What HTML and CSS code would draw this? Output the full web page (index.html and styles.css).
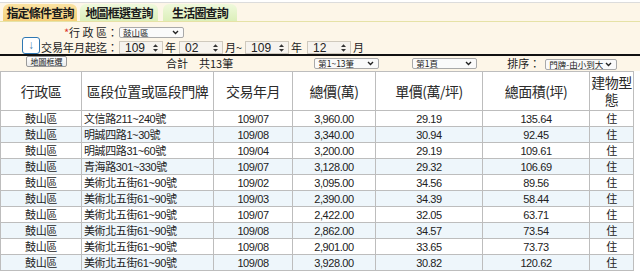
FILE: index.html
```html
<!DOCTYPE html>
<html lang="zh-Hant">
<head>
<meta charset="utf-8">
<title>實價登錄查詢</title>
<link rel="stylesheet" href="styles.css">
</head>
<body>
<div class="topline"></div>
<div class="head">
  <div class="tabs">
    <div class="tab active">指定條件查詢</div>
    <div class="tab t2">地圖框選查詢</div>
    <div class="tab t3">生活圈查詢</div>
  </div>
  <div class="form">
    <div class="row r1">
      <div class="lead"><span class="lbl"><span class="req">*</span>行 政 區：</span></div>
      <div class="sel s-dist">鼓山區<svg class="chev" viewBox="0 0 8 6"><path d="M1 1.2 4 4.3 7 1.2" fill="none" stroke="#222" stroke-width="1.6"/></svg></div>
    </div>
    <div class="row r2">
      <div class="lead"><span class="dl">↓</span><span class="lbl">交易年月起迄：</span></div>
      <div class="num">109<svg class="spin" viewBox="0 0 6 9"><path d="M3 0 6 3.4H0Z M3 9 6 5.6H0Z" fill="#333"/></svg></div>
      <span class="unit">年</span>
      <div class="num">02<svg class="spin" viewBox="0 0 6 9"><path d="M3 0 6 3.4H0Z M3 9 6 5.6H0Z" fill="#333"/></svg></div>
      <span class="unit">月~</span>
      <div class="num">109<svg class="spin" viewBox="0 0 6 9"><path d="M3 0 6 3.4H0Z M3 9 6 5.6H0Z" fill="#333"/></svg></div>
      <span class="unit">年</span>
      <div class="num n4">12<svg class="spin" viewBox="0 0 6 9"><path d="M3 0 6 3.4H0Z M3 9 6 5.6H0Z" fill="#333"/></svg></div>
      <span class="unit">月</span>
    </div>
  </div>
</div>
<div class="bar">
  <div class="btn">地圖框選</div>
  <div class="total">合計　共13筆</div>
  <div class="sel s-rows">第1~13筆<svg class="chev" viewBox="0 0 8 6"><path d="M1 1.2 4 4.3 7 1.2" fill="none" stroke="#222" stroke-width="1.6"/></svg></div>
  <div class="sel s-page">第1頁<svg class="chev" viewBox="0 0 8 6"><path d="M1 1.2 4 4.3 7 1.2" fill="none" stroke="#222" stroke-width="1.6"/></svg></div>
  <div class="sortlbl">排序：</div>
  <div class="sel s-sort">門牌-由小到大<svg class="chev" viewBox="0 0 8 6"><path d="M1 1.2 4 4.3 7 1.2" fill="none" stroke="#222" stroke-width="1.6"/></svg></div>
</div>
<table class="grid">
  <colgroup>
    <col class="c1"><col class="c2"><col class="c3"><col class="c4"><col class="c5"><col class="c6"><col class="c7">
  </colgroup>
  <thead>
    <tr><th>行政區</th><th>區段位置或區段門牌</th><th>交易年月</th><th>總價(萬)</th><th>單價(萬/坪)</th><th>總面積(坪)</th><th>建物型態</th></tr>
  </thead>
  <tbody>
    <tr><td>鼓山區</td><td class="addr">文信路211~240號</td><td>109/07</td><td>3,960.00</td><td>29.19</td><td>135.64</td><td>住</td></tr>
    <tr><td>鼓山區</td><td class="addr">明誠四路1~30號</td><td>109/08</td><td>3,340.00</td><td>30.94</td><td>92.45</td><td>住</td></tr>
    <tr><td>鼓山區</td><td class="addr">明誠四路31~60號</td><td>109/04</td><td>3,200.00</td><td>29.19</td><td>109.61</td><td>住</td></tr>
    <tr><td>鼓山區</td><td class="addr">青海路301~330號</td><td>109/07</td><td>3,128.00</td><td>29.32</td><td>106.69</td><td>住</td></tr>
    <tr><td>鼓山區</td><td class="addr">美術北五街61~90號</td><td>109/02</td><td>3,095.00</td><td>34.56</td><td>89.56</td><td>住</td></tr>
    <tr><td>鼓山區</td><td class="addr">美術北五街61~90號</td><td>109/03</td><td>2,390.00</td><td>34.39</td><td>58.44</td><td>住</td></tr>
    <tr><td>鼓山區</td><td class="addr">美術北五街61~90號</td><td>109/07</td><td>2,422.00</td><td>32.05</td><td>63.71</td><td>住</td></tr>
    <tr><td>鼓山區</td><td class="addr">美術北五街61~90號</td><td>109/08</td><td>2,862.00</td><td>34.57</td><td>73.54</td><td>住</td></tr>
    <tr><td>鼓山區</td><td class="addr">美術北五街61~90號</td><td>109/08</td><td>2,901.00</td><td>33.65</td><td>73.73</td><td>住</td></tr>
    <tr><td>鼓山區</td><td class="addr">美術北五街61~90號</td><td>109/08</td><td>3,928.00</td><td>30.82</td><td>120.62</td><td>住</td></tr>
  </tbody>
</table>
</body>
</html>
```

FILE: styles.css
```css
* { box-sizing: border-box; }
body {
  margin: 0;
  background: #fff;
  font-family: "Liberation Sans", "Noto Sans CJK TC", sans-serif;
  color: #222;
}
.topline {
  height: 3px;
  background: #fff;
  border-bottom: 1px solid #dcdcdc;
}
.head { background: #fdf6e8; }
.tabs {
  display: flex;
  height: 19px;
  padding: 1px 0 0 3px;
  border-bottom: 1px solid #e6e2a6;
}
.tab {
  height: 17px;
  display: flex;
  align-items: center;
  justify-content: center;
  font-family: "Noto Sans CJK TC", sans-serif;
  font-size: 12px;
  font-weight: bold;
  letter-spacing: -0.8px;
  color: #1a1a1a;
  border-radius: 6px 6px 0 0;
  background: linear-gradient(#eff9dc, #dcefba);
}
.tab.active { width: 74px; background: linear-gradient(#fbe3a2, #f4cf78); }
.tab.t2 { width: 78px; margin-left: 3px; }
.tab.t3 { width: 74px; margin-left: 5px; }

.form {
  padding-top: 5px;
  border-bottom: 2px solid #111;
}
.row { display: flex; }
.r1 { height: 11px; align-items: center; }
.r2 { height: 17px; margin-top: -1px; align-items: flex-end; }
.lead {
  width: 119px;
  display: flex;
  justify-content: flex-end;
  align-items: flex-end;
}
.lbl {
  font-family: "Noto Sans CJK TC", sans-serif;
  font-size: 11px;
  line-height: 13px;
  color: #222;
  padding-right: 1px;
}
.r1 .lbl { line-height: 11px; }
.req { color: #d9342b; }
.dl {
  width: 18px;
  height: 17px;
  margin-right: auto;
  margin-left: 22px;
  border: 1px solid #2f78b3;
  border-radius: 3px;
  background: #fff;
  color: #4a7fb0;
  font-size: 12px;
  line-height: 15px;
  text-align: center;
}
.sel {
  display: flex;
  align-items: center;
  justify-content: space-between;
  height: 11px;
  padding: 0 4px 0 3px;
  border: 1px solid #a9a9a9;
  border-radius: 2px;
  background: #fafafa;
  font-family: "Noto Sans CJK TC", sans-serif;
  font-size: 8.5px;
  line-height: 9px;
  color: #222;
}
.chev { width: 7px; height: 5px; flex: none; }
.s-dist { width: 65px; }
.num {
  display: flex;
  align-items: center;
  justify-content: space-between;
  width: 44px;
  height: 13px;
  padding: 0 4px 0 5px;
  border: 1px solid #cfc9bd;
  background: #f6f3ee;
  font-size: 12px;
  line-height: 12px;
  color: #222;
}
.spin { width: 5px; height: 8px; }
.unit {
  font-family: "Noto Sans CJK TC", sans-serif;
  font-size: 11px;
  line-height: 13px;
  margin: 0 3px 0 2px;
  color: #222;
}
.n4 { margin-left: 2px; }

.bar {
  display: flex;
  align-items: flex-start;
  height: 15px;
  background: #fdf6e8;
}
.btn {
  margin-left: 26px;
  width: 41px;
  height: 11px;
  border: 1px solid #9a9a9a;
  border-radius: 2px;
  background: linear-gradient(#ffffff, #ececec);
  font-family: "Noto Sans CJK TC", sans-serif;
  font-size: 8px;
  line-height: 9px;
  text-align: center;
  color: #222;
}
.total {
  margin-left: 99px;
  margin-top: 1px;
  font-family: "Noto Sans CJK TC", sans-serif;
  font-size: 11px;
  line-height: 13px;
  color: #222;
}
.s-rows { width: 65px; margin-left: 81px; margin-top: 2px; }
.s-page { width: 65px; margin-left: 33px; margin-top: 2px; }
.sortlbl {
  margin-left: 30px;
  margin-top: 1px;
  font-family: "Noto Sans CJK TC", sans-serif;
  font-size: 11px;
  line-height: 13px;
  color: #222;
}
.s-sort { width: 72px; margin-left: 5px; margin-top: 3px; }

.grid {
  width: 633px;
  table-layout: fixed;
  border-collapse: collapse;
  background: #fff;
}
.c1 { width: 81px; }
.c2 { width: 132px; }
.c3 { width: 79px; }
.c4 { width: 83px; }
.c5 { width: 107px; }
.c6 { width: 107px; }
.c7 { width: 44px; }
.grid th, .grid td {
  border: 1px solid #bdbdbd;
  padding: 0;
  text-align: center;
  color: #222;
}
.grid th {
  height: 39px;
  font-family: "Noto Sans CJK TC", sans-serif;
  font-weight: normal;
  font-size: 14px;
  letter-spacing: -0.5px;
  line-height: 17px;
  color: #2a2a2a;
}
.grid td {
  height: 16px;
  font-size: 11px;
  letter-spacing: -0.4px;
  line-height: 14px;
  white-space: nowrap;
}
.grid td.addr { text-align: left; padding-left: 2px; }
.grid tbody tr:nth-child(even) td { background: #eef6fb; }
```
